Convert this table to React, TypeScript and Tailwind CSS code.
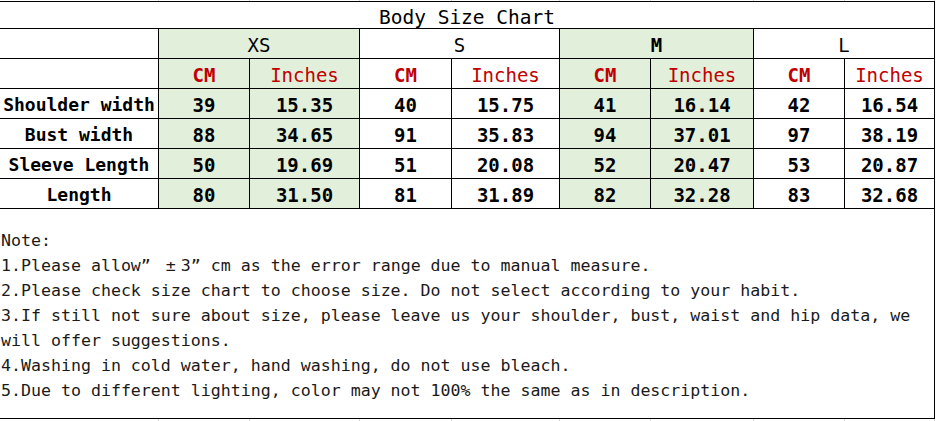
import React from 'react';

const cols = [159, 91, 110, 92, 108, 91, 103, 91, 90];

const sizes = [
  { name: 'XS', green: true, bold: false },
  { name: 'S', green: false, bold: false },
  { name: 'M', green: true, bold: true },
  { name: 'L', green: false, bold: false },
];

const rows = [
  { label: 'Shoulder width', values: ['39', '15.35', '40', '15.75', '41', '16.14', '42', '16.54'] },
  { label: 'Bust width', values: ['88', '34.65', '91', '35.83', '94', '37.01', '97', '38.19'] },
  { label: 'Sleeve Length', values: ['50', '19.69', '51', '20.08', '52', '20.47', '53', '20.87'] },
  { label: 'Length', values: ['80', '31.50', '81', '31.89', '82', '32.28', '83', '32.68'] },
];

const font = { fontFamily: '"DejaVu Sans Mono", "Noto Sans CJK SC", monospace' };

// light spreadsheet gridlines peeking out above and below the chart
const GridStrip: React.FC<{ h: string }> = ({ h }) => (
  <div className={`flex ${h}`}>
    {cols.map((w, i) => (
      <div key={i} className="border-r border-[#d4d4d4]" style={{ width: w }} />
    ))}
  </div>
);

const greenCol = (i: number) => i === 0 || i === 1 || i === 4 || i === 5;

const cell = 'h-[30px] pt-[3px] border-r border-b border-black flex items-center justify-center leading-none';

export default function App() {
  return (
    <div className="w-[937px] h-[421px] bg-white overflow-hidden text-black" style={font}>
      <GridStrip h="h-[1px]" />

      <div className="w-[935px] border-t border-black grid grid-cols-[159px_91px_110px_92px_108px_91px_103px_91px_90px]">
        {/* Title */}
        <div className="col-span-9 h-[27px] pt-[5px] border-r border-b border-black flex items-center justify-center text-[19.5px] leading-none">
          Body Size Chart
        </div>

        {/* Size names */}
        <div className={cell} />
        {sizes.map((s) => (
          <div
            key={s.name}
            className={`col-span-2 ${cell} text-[19px] ${s.green ? 'bg-[#e2efda]' : 'bg-white'} ${
              s.bold ? 'font-bold' : ''
            }`}
          >
            {s.name}
          </div>
        ))}

        {/* Units */}
        <div className={cell} />
        {sizes.map((s) => (
          <React.Fragment key={s.name}>
            <div className={`${cell} text-[19px] font-bold text-[#c00000] ${s.green ? 'bg-[#e2efda]' : ''}`}>
              CM
            </div>
            <div className={`${cell} text-[19px] text-[#c00000] ${s.green ? 'bg-[#e2efda]' : ''}`}>
              Inches
            </div>
          </React.Fragment>
        ))}

        {/* Measurements */}
        {rows.map((r) => (
          <React.Fragment key={r.label}>
            <div className={`${cell} text-[18px] font-bold whitespace-nowrap`}>{r.label}</div>
            {r.values.map((v, i) => (
              <div key={i} className={`${cell} text-[19px] font-bold ${greenCol(i) ? 'bg-[#e2efda]' : ''}`}>
                {v}
              </div>
            ))}
          </React.Fragment>
        ))}

        {/* Notes */}
        <div className="col-span-9 h-[210px] border-r border-b border-black pt-[19px] pl-[1px] text-[16.6px] leading-[25px] text-[#1a1a1a] whitespace-pre">
          <div>Note:</div>
          <div>
            1.Please allow” <span className="inline-block w-[20px] text-center">±</span>3” cm as the error range due to manual measure.
          </div>
          <div>2.Please check size chart to choose size. Do not select according to your habit.</div>
          <div>3.If still not sure about size, please leave us your shoulder, bust, waist and hip data, we</div>
          <div>will offer suggestions.</div>
          <div>4.Washing in cold water, hand washing, do not use bleach.</div>
          <div>5.Due to different lighting, color may not 100% the same as in description.</div>
        </div>
      </div>

      <GridStrip h="h-[3px]" />
    </div>
  );
}
